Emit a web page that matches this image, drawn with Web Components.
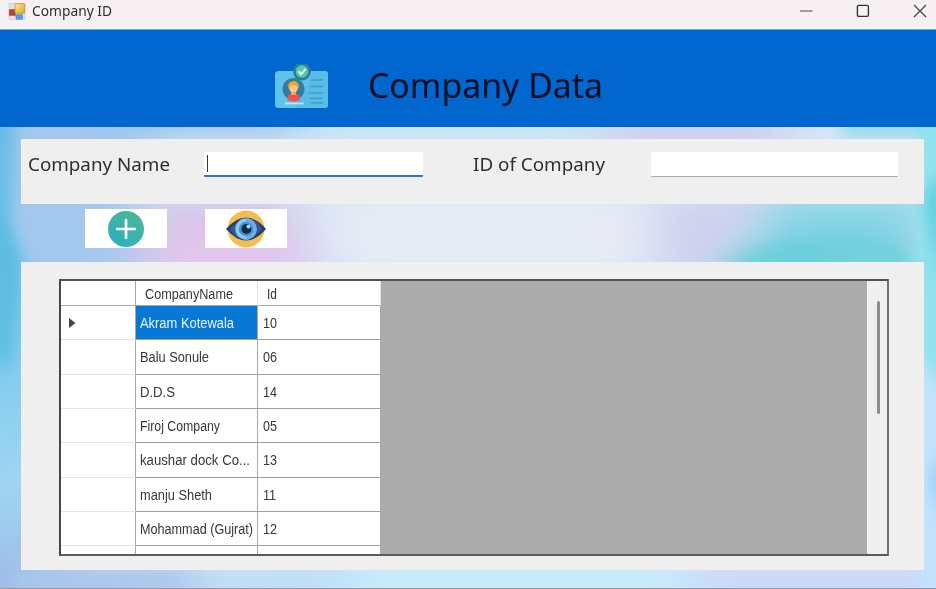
<!DOCTYPE html>
<html lang="en"><head><meta charset="utf-8"><title>Company ID</title>
<style>html,body{margin:0;height:100%;overflow:hidden}</style></head><body>
<company-window></company-window>
<script>
const define=(name,html,init)=>customElements.define(name,class extends HTMLElement{
 constructor(){super();this.attachShadow({mode:'open'}).innerHTML=html}
 connectedCallback(){if(init)init.call(this,this.shadowRoot)}
});

// A single line of text condensed or widened to the width given in its "w" attribute.
define('fit-text',`<style>:host{display:block;white-space:nowrap;flex:none}span{display:inline-block;transform-origin:0 50%}</style><span><slot></slot></span>`,
function(r){const w=+this.getAttribute('w');this.style.width=w+'px';const s=r.querySelector('span');
 s.style.transform='scaleX('+w/s.getBoundingClientRect().width+')'});

define('title-bar',`<style>
:host{display:flex;align-items:center;height:29px;box-sizing:border-box;padding:0 9px 7px 8px;background:#f6f0f3;color:#2e2c2e;font:14px/22px "Noto Sans","Open Sans",sans-serif}
svg{display:block;flex:none}.gap{flex:1}fit-text{margin-left:6px}.ctl{display:flex;gap:43px;align-items:center}
</style>
<svg width="18" height="18" viewBox="0 0 18 18"><defs><linearGradient id="y" x2="1" y2="1"><stop stop-color="#fff08a"/><stop offset="1" stop-color="#e0a422"/></linearGradient></defs>
<rect x="1" y="1.5" width="16" height="16" fill="#dfe4ec" stroke="#c2cbd8" stroke-width=".7"/>
<rect x="1.3" y="7.6" width="6.2" height="6" rx=".6" fill="#b6403a" stroke="#96504c" stroke-width=".6"/><rect x="8" y="12.6" width="6.5" height="4.6" rx=".5" fill="#5c9bea" stroke="#477cc7" stroke-width=".6"/>
<rect x="7" y="1.8" width="9.6" height="9.4" rx=".8" fill="url(#y)" stroke="#b78c2b" stroke-width=".7"/></svg>
<fit-text w="80">Company ID</fit-text><div class="gap"></div>
<div class="ctl"><svg width="13" height="14"><path d="M0 7H12.5" stroke="#777076" stroke-width="1.3"/></svg>
<svg width="14" height="14"><rect x="1.4" y="1.4" width="11" height="11" rx="1.4" fill="none" stroke="#373237" stroke-width="1.4"/></svg>
<svg width="14" height="14"><path d="M1 1 13 13M13 1 1 13" stroke="#494449" stroke-width="1.3"/></svg></div>`);

define('page-banner',`<style>
:host{display:flex;height:97.5px;background:#0166cd;box-sizing:border-box;padding:34px 0 0 274px;color:#061022;align-items:flex-start;border-top:1px solid #68aee0}
svg{display:block;flex:none}fit-text{margin:-3px 0 0 39px;font:34px/48px "Noto Sans","Open Sans",sans-serif}
</style>
<svg width="55" height="46" viewBox="0 0 55 46"><rect x="1" y="7" width="53" height="37" rx="3.5" fill="#5fc3eb"/>
<path d="M40 7h10.5q3.5 0 3.5 3.5v30q0 3.5-3.5 3.5H22z" fill="#57bce6"/>
<path d="M37 16H49M35.5 22.5H49M35.5 29H49M35.5 34.5H49M37 39H49" stroke="#3f9fc9" stroke-width="1.3"/>
<circle cx="19.5" cy="25" r="11" fill="#337e9f"/><path d="M13.5 36.5v-2.8q0-4.5 6-4.5t6 4.5v2.8q-5.5 2-12 0z" fill="#ef5350"/><rect x="17" y="26" width="5" height="5" fill="#ef9c62"/>
<circle cx="19.5" cy="22.3" r="5.4" fill="#f3a42e"/><ellipse cx="19.5" cy="24.7" rx="3.7" ry="3.8" fill="#ffc58b"/>
<path d="M11 39.5H30" stroke="#b8ebfa" stroke-width="1.7"/>
<circle cx="28" cy="7.5" r="9" fill="#28808f"/><circle cx="28" cy="7.5" r="6.2" fill="#56c8ad"/><path d="m24.7 7.5 2.4 2.6 4.5-5" fill="none" stroke="#effff7" stroke-width="1.9"/></svg>
<fit-text w="235">Company Data</fit-text>`);

define('field-panel',`<style>
:host{display:flex;align-items:flex-start;height:65px;box-sizing:border-box;background:#efefef;padding:13px 0 0 7px;color:#2d2e31;font:18.5px/26px "Noto Sans","Open Sans",sans-serif}
</style><slot></slot>`);
define('text-field',`<style>
:host{display:block;flex:none;height:25px;box-sizing:border-box;background:#fff;border-bottom:1.5px solid #aaa;border-radius:1px}
:host([active]){border-bottom:2px solid #2e78ba}
i{display:none}:host([active]) i{display:block;width:1.4px;height:17px;margin:3px 0 0 3px;background:#333;float:left}
</style><i></i>`,function(){this.style.width=this.getAttribute('w')+'px'});

define('icon-button',`<style>:host{display:flex;flex:none;width:82px;height:39px;background:#fff;align-items:center;justify-content:center}</style><slot></slot>`);

define('grid-row',`<style>
:host{display:grid;grid-template-columns:74.5px 122.5px 122.5px;grid-template-rows:100%;height:34.33px;flex:none;font:14px/34px "Liberation Sans",Arial,sans-serif;color:#37363a}
div{box-sizing:border-box;border-right:1px solid #a6a6a6;border-bottom:1px solid #a0a0a0;background:#fff;padding-left:4px;min-width:0}
.i{padding-left:5px}
.h{border-bottom-color:#e4e4e4;display:flex;align-items:center;padding-left:7px}
:host([head]){height:25px;line-height:26px}:host([head]) div{padding-left:9px;border-right-color:#e2e2e2;border-bottom-color:#a8a8a8}:host([head]) .h{border-right-color:#a6a6a6}
:host([selected]) .n{background:#0878d7;color:#e9f5ff}
svg{display:none}:host([selected]) svg{display:block}
</style><div class="h"><svg width="9" height="12"><path d="M1 1 7.5 6 1 11z" fill="#444"/></svg></div><div class="n"><slot name="name"></slot></div><div class="i"><slot name="id"></slot></div>`);

define('data-grid',`<style>
:host{display:flex;height:277px;width:830px;box-sizing:border-box;border:2px solid;border-color:#515151 #707070 #5b5b5b #464646;background:#ababab;overflow:hidden}
.rows{display:flex;flex-direction:column;width:319.5px;height:273px;overflow:hidden}.space{flex:1}
.bar{width:20px;background:#efefef;display:flex;justify-content:center;padding-top:20px;box-sizing:border-box}.thumb{width:3px;height:113px;border-radius:2px;background:#8c8c8c;margin-left:2px}
</style><div class="rows"></div><div class="space"></div><div class="bar"><div class="thumb"></div></div>`,
function(r){
 const data=[['CompanyName',88,'Id',10],['Akram Kotewala',94,'10',14],['Balu Sonule',69,'06',14],['D.D.S',35,'14',14],['Firoj Company',80,'05',14],['kaushar dock Co...',110,'13',14],['manju Sheth',72,'11',13],['Mohammad (Gujrat)',113,'12',14]];
 r.querySelector('.rows').innerHTML=data.map((d,i)=>`<grid-row ${i==0?'head':i==1?'selected':''}><fit-text slot="name" w="${d[1]}">${d[0]}</fit-text><fit-text slot="id" w="${d[3]}">${d[2]}</fit-text></grid-row>`).join('')+'<grid-row></grid-row>';
});

// Soft watercolour wash behind the panels.
define('wash-area',`<style>
:host{display:grid;height:462.5px;box-sizing:border-box;overflow:hidden;border-bottom:1px solid #9398a8}
svg{grid-area:1/1;width:936px;height:462px;display:block}.content{grid-area:1/1;min-width:0;padding:12.5px 12px 0 21px;z-index:1}
</style>
<svg viewBox="0 0 936 462" preserveAspectRatio="none"><defs><filter id="b" x="-30%" y="-50%" width="160%" height="200%"><feGaussianBlur stdDeviation="24 14"/></filter><filter id="s" x="-30%" y="-30%" width="160%" height="160%"><feGaussianBlur stdDeviation="7"/></filter>
<linearGradient id="l" x2="0" y2="1"><stop stop-color="#6bb9e6"/><stop offset=".35" stop-color="#69c6ea"/><stop offset=".75" stop-color="#9fd5f3"/><stop offset="1" stop-color="#a0b7e4"/></linearGradient></defs>
<rect width="936" height="462" fill="#d5e6f6"/>
<g filter="url(#b)"><path d="M-50-50H180Q120 60 150 160L60 500H-50z" fill="#a4c8ed"/><path d="M90-20H310V10H100z" fill="#99c5ec"/><path d="M300-20H610V15H300z" fill="#c8e5f5"/>
<path d="M165 70H290L320 150H130z" fill="#d6c5ea"/><ellipse cx="225" cy="122" rx="80" ry="22" fill="#e3c5ea"/><path d="M325 70H650V145H340z" fill="#e7ebf6"/><path d="M610-20H790V25H600z" fill="#cfd0ed"/>
<path d="M655 70H775L710 150H650z" fill="#d0d1ef"/><path d="M770 65H930V145H740z" fill="#8fd6e8"/><path d="M740 118 860 95 915 120V155H710z" fill="#6fd0dc"/>
<path d="M25 435H200V480H25z" fill="#a9c5eb"/><path d="M215 435H360V480H215z" fill="#bcdff5"/><path d="M360 435H690V480H340z" fill="#c5ecfa"/><path d="M690 435H960V480H690z" fill="#cad8f8"/></g>
<g filter="url(#s)"><path d="M-20-20H16L12 95 26 140V430L5 480H-20z" fill="url(#l)"/><path d="M-8 45Q4 85 20 135L12 240H-8z" fill="#55b8dc" opacity=".65"/><path d="M845-20H950V12H840z" fill="#9fdced"/><path d="M918-20H945V290L918 265z" fill="#8ee1ee"/><path d="M924 70Q928 110 945 155V40z" fill="#61cddd"/><path d="M920 225 945 270V475H920z" fill="#c1e2fc"/><path d="M940 320 930 355 942 400z" fill="#89c6f2"/>
<path d="M730 133 800 112 840 139H725zM880 135 895 120 925 145z" fill="#61ccd9" opacity=".55"/></g></svg>
<div class="content"><slot></slot></div>`);

define('company-window',`<style>
:host{display:flex;flex-direction:column;width:936px;height:589px;overflow:hidden;background:#f6f0f3}
wash-area{flex:none}.actions{display:flex;gap:38.5px;padding:5px 0 14px 63.5px}.list{background:#efefef;height:308px;box-sizing:border-box;padding:17px 0 0 38px}
.l2{margin-left:50px}.f1{margin-left:34px}.f2{margin-left:46px}svg{display:block}
field-panel fit-text{margin-top:-1px}
</style>
<title-bar></title-bar><page-banner></page-banner>
<wash-area><field-panel><fit-text w="142">Company Name</fit-text><text-field class="f1" w="219" active></text-field><fit-text class="l2" w="132">ID of Company</fit-text><text-field class="f2" w="247"></text-field></field-panel>
<div class="actions"><icon-button><svg width="36" height="36" viewBox="0 0 36 36"><defs><linearGradient id="g" y1="1" x2="1" y2="0"><stop stop-color="#2baec4"/><stop offset="1" stop-color="#4db993"/></linearGradient></defs><circle cx="18" cy="18" r="18" fill="url(#g)"/><path d="M18 9.2V26.8M9.2 18H26.8" stroke="#fff" stroke-width="2.7" stroke-linecap="round"/></svg></icon-button>
<icon-button><svg width="40" height="38" viewBox="0 0 40 38"><circle cx="20" cy="19" r="18.5" fill="#f5bd4f"/><path d="M0 19Q10 7.5 20 7.5T40 19Q30 30.5 20 30.5T0 19z" fill="#273d70"/><path d="M4 19Q10 11 20 9.5T36 19Q30 27 20 28.5T4 19z" fill="#345a93"/><circle cx="20" cy="19" r="10.7" fill="#87c8f5"/><path d="M20 8.3a10.7 10.7 0 0 1 0 21.4z" fill="#67afe8"/><circle cx="20" cy="19" r="7.2" fill="#4b91ca"/><circle cx="20.4" cy="19" r="5" fill="#142b4c"/><circle cx="22.5" cy="16.6" r="2" fill="#9edbff"/></svg></icon-button></div>
<div class="list"><data-grid></data-grid></div></wash-area>`);
</script></body></html>
